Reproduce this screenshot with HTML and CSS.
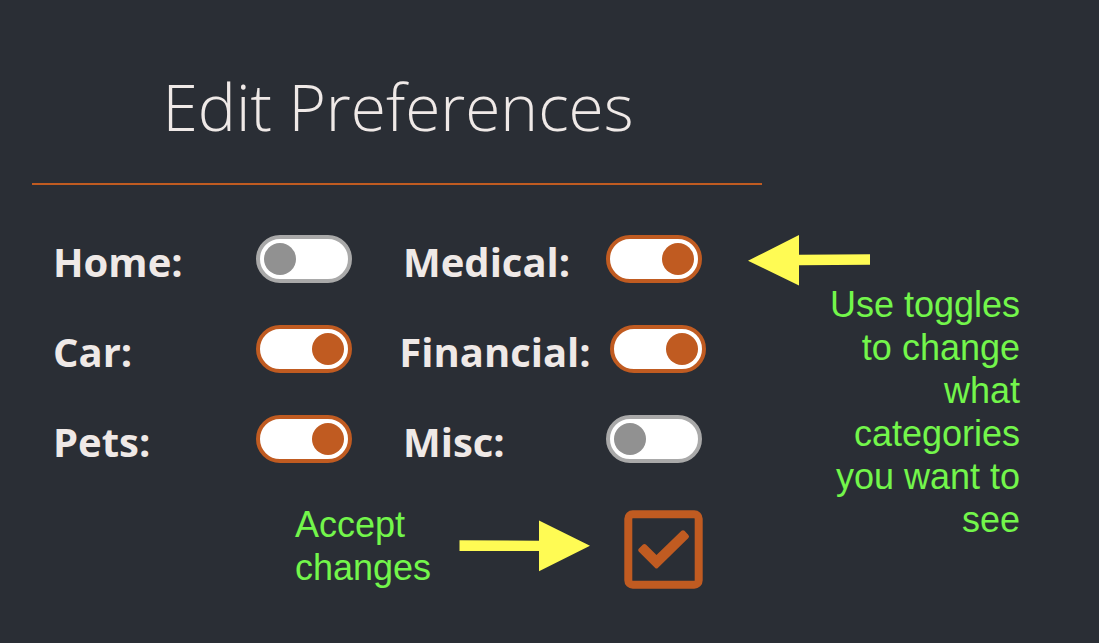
FILE: index.html
```html
<!DOCTYPE html>
<html lang="en">
<head>
<meta charset="utf-8">
<meta name="viewport" content="width=device-width, initial-scale=1">
<title>Edit Preferences</title>
<link rel="stylesheet" href="styles.css">
</head>
<body>
<main class="page">
  <h1 class="title">Edit Preferences</h1>
  <div class="content">
    <form class="preferences">
      <div class="categories">
        <div class="category"><label for="home">Home:</label><input class="toggle" type="checkbox" id="home"></div>
        <div class="category"><label for="medical">Medical:</label><input class="toggle" type="checkbox" id="medical" checked></div>
        <div class="category"><label for="car">Car:</label><input class="toggle" type="checkbox" id="car" checked></div>
        <div class="category"><label for="financial">Financial:</label><input class="toggle" type="checkbox" id="financial" checked></div>
        <div class="category"><label for="pets">Pets:</label><input class="toggle" type="checkbox" id="pets" checked></div>
        <div class="category"><label for="misc">Misc:</label><input class="toggle" type="checkbox" id="misc"></div>
      </div>
      <div class="accept">
        <p class="note accept-note">Accept changes</p>
        <svg class="arrow" width="132" height="52" viewBox="0 0 132 52" aria-hidden="true"><path d="M0.500 20.300L80 20.800V0.500L131 25.700L80 51.200V31L0.500 31z"/></svg>
        <button class="accept-button" type="button" aria-label="Accept changes">
          <svg width="79" height="79" viewBox="0 0 79 79" aria-hidden="true"><rect class="check-box" x="4.300" y="4.300" width="70.400" height="70.400" rx="4.500"/><path class="check-mark" d="M14.700 41.500Q13.500 40 14.700 38.800L19 34.500Q20.500 33.300 21.900 34.500L32.500 45L57.500 20.800Q59 19.500 60.500 20.800L64.400 25Q65.700 26.500 64.400 28L33.800 58Q32.500 59.200 31.200 58z"/></svg>
        </button>
      </div>
    </form>
    <aside class="help">
      <svg class="arrow" width="123" height="52" viewBox="0 0 123 52" aria-hidden="true"><path d="M0 25.700L51 0V19.700L122 19.300V29.800L51 30.300V50.500z"/></svg>
      <p class="note help-note">Use toggles to change what categories you want to see</p>
    </aside>
  </div>
</main>
</body>
</html>
```
FILE: styles.css
```css
* {
  box-sizing: border-box;
}

body {
  margin: 0;
  background: #2a2e35;
  color: #efe9e7;
  font-family: "Open Sans", sans-serif;
}

.page {
  padding: 63px 32px 54px;
}

.title {
  max-width: 730px;
  margin: 0 0 50px;
  padding: 0 0 33px 2px;
  border-bottom: 2px solid #c05b21;
  font-size: 64px;
  font-weight: 300;
  line-height: 87px;
  text-align: center;
}

.content {
  display: flex;
  align-items: flex-start;
}

.preferences {
  flex: 0 1 716px;
}

.categories {
  display: grid;
  grid-template-columns: repeat(2, minmax(0, 300px));
  gap: 36px 50px;
  padding-left: 20px;
}

.category {
  display: flex;
  justify-self: center;
  justify-content: space-between;
  align-items: flex-start;
  gap: 19px;
  min-width: 100%;
  padding-left: 1px;
  font-size: 40px;
  font-weight: 700;
  line-height: 54px;
}

.toggle {
  flex: none;
  appearance: none;
  width: 96px;
  height: 48px;
  margin: 0;
  padding: 4px;
  border: 4px solid #a9a9a9;
  border-radius: 24px;
  background: #fff;
  cursor: pointer;
}

.toggle::before {
  content: "";
  display: block;
  width: 32px;
  height: 32px;
  border-radius: 50%;
  background: #919191;
}

.toggle:checked {
  border-color: #c05b21;
}

.toggle:checked::before {
  margin-left: auto;
  background: #c05b21;
}

.accept {
  display: flex;
  justify-content: flex-end;
  align-items: center;
  margin-top: 34px;
  padding-right: 45px;
}

.note {
  margin: 0;
  color: #73f64b;
  font-family: "Liberation Sans", Helvetica, sans-serif;
  font-size: 36px;
  line-height: 43px;
}

.accept-note {
  width: 138px;
  margin-right: 26px;
}

.arrow {
  display: block;
  flex: none;
  fill: #fffb54;
}

.accept-button {
  align-self: flex-end;
  flex: none;
  margin-left: 33px;
  padding: 0;
  border: 0;
  background: none;
  cursor: pointer;
}

.accept-button svg {
  display: block;
}

.check-box {
  fill: none;
  stroke: #c05b21;
  stroke-width: 8;
}

.check-mark {
  fill: #c05b21;
}

.help {
  flex: 0 1 272px;
}

.help-note {
  width: 200px;
  margin: -4px 0 0 auto;
  text-align: right;
}
```
